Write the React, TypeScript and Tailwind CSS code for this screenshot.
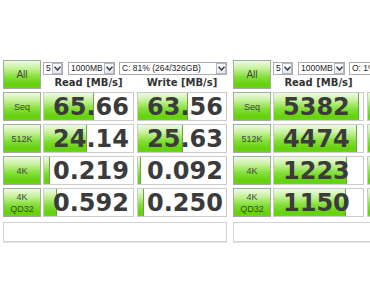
import React from 'react';

type Cell = { v: string; bar: number };
type Row = { label: React.ReactNode; read: Cell; write: Cell };

const leftRows: Row[] = [
  { label: 'Seq', read: { v: '65.66', bar: 50 }, write: { v: '63.56', bar: 50 } },
  { label: '512K', read: { v: '24.14', bar: 43 }, write: { v: '25.63', bar: 45 } },
  { label: '4K', read: { v: '0.219', bar: 6 }, write: { v: '0.092', bar: 3 } },
  { label: 'QD', read: { v: '0.592', bar: 13 }, write: { v: '0.250', bar: 6 } },
];

const rightRows: Row[] = [
  { label: 'Seq', read: { v: '5382', bar: 85 }, write: { v: '4987', bar: 84 } },
  { label: '512K', read: { v: '4474', bar: 83 }, write: { v: '4012', bar: 82 } },
  { label: '4K', read: { v: '1223', bar: 73 }, write: { v: '1064', bar: 72 } },
  { label: 'QD', read: { v: '1150', bar: 72 }, write: { v: '1038', bar: 71 } },
];

const green =
  'bg-[linear-gradient(to_bottom,#eefbe4_0%,#c6f19c_28%,#86df3c_58%,#63d20a_88%,#6cd618_100%)]';

const Chevron = () => (
  <svg width="7" height="5" viewBox="0 0 7 5">
    <polyline points="0.5,0.8 3.5,4 6.5,0.8" fill="none" stroke="#2f3a4a" strokeWidth="1.5" />
  </svg>
);

const Select = ({ text, w }: { text: string; w: string }) => (
  <div className={`${w} h-[13px] shrink-0 border border-[#a9adb3] bg-white flex items-center overflow-hidden`}>
    <span className="flex-1 min-w-0 pl-[2px] text-[8.5px] leading-[11px] text-[#222] whitespace-nowrap overflow-hidden">
      {text}
    </span>
    <span className="w-[10px] h-[11px] shrink-0 border border-[#b5b9bf] bg-[linear-gradient(to_bottom,#ffffff,#e6e8eb)] flex items-center justify-center">
      <Chevron />
    </span>
  </div>
);

const Btn = ({ children, big }: { children: React.ReactNode; big?: boolean }) => (
  <div
    className={`w-[38px] h-[29px] shrink-0 border border-[#a3a8a0] ${green} flex flex-col items-center justify-center text-[#444] ${
      big ? 'text-[10px]' : 'text-[9px] leading-[12px]'
    }`}
  >
    {children}
  </div>
);

const DataCell = ({ c, w, ml }: { c: Cell; w: string; ml: string }) => (
  <div className={`relative ${w} ${ml} h-[29px] shrink-0 border border-[#cbcbcb] bg-white overflow-hidden`}>
    <div
      className={`absolute left-0 top-0 bottom-0 ${green} border-r border-[#6f9f4f]`}
      style={{ width: c.bar }}
    />
    <div className="relative pl-[9px] pt-[1px] text-[24px] leading-[27px] font-bold text-[#3b3b3b] whitespace-nowrap font-['DejaVu_Sans',sans-serif]">
      {c.v}
    </div>
  </div>
);

const Panel = ({ rows, drive }: { rows: Row[]; drive: string }) => (
  <div className="w-[230px] shrink-0 pl-[3px] flex flex-col gap-[3px]">
    <div className="flex">
      <Btn big>All</Btn>
      <div className="ml-[2px] flex flex-col">
        <div className="flex mt-[2px]">
          <Select text="5" w="w-[20px]" />
          <div className="ml-[5px]">
            <Select text="1000MB" w="w-[47px]" />
          </div>
          <div className="ml-[4px]">
            <Select text={drive} w="w-[108px]" />
          </div>
        </div>
        <div className="flex mt-[1px] text-[10px] leading-[13px] font-bold text-[#333] font-['DejaVu_Sans',sans-serif]">
          <div className="w-[91px] text-center">Read [MB/s]</div>
          <div className="w-[90px] ml-[3px] text-center whitespace-nowrap">Write [MB/s]</div>
        </div>
      </div>
    </div>
    {rows.map((r, i) => (
      <div key={i} className="flex">
        <Btn>
          {r.label === 'QD' ? (
            <>
              <span>4K</span>
              <span>QD32</span>
            </>
          ) : (
            r.label
          )}
        </Btn>
        <DataCell c={r.read} w="w-[91px]" ml="ml-[2px]" />
        <DataCell c={r.write} w="w-[90px]" ml="ml-[3px]" />
      </div>
    ))}
    <div className="mt-[2px] w-[224px] h-[20px] border border-[#d2d2d2] bg-white shadow-[0_1px_0_#e4e4e4]" />
  </div>
);

export default function App() {
  return (
    <div className="w-[370px] h-[297px] overflow-hidden bg-white font-['Liberation_Sans',Arial,sans-serif]">
      <div className="flex pt-[60px]">
        <Panel rows={leftRows} drive="C: 81% (264/326GB)" />
        <Panel rows={rightRows} drive="O: 1% (4/932GB)" />
      </div>
    </div>
  );
}
